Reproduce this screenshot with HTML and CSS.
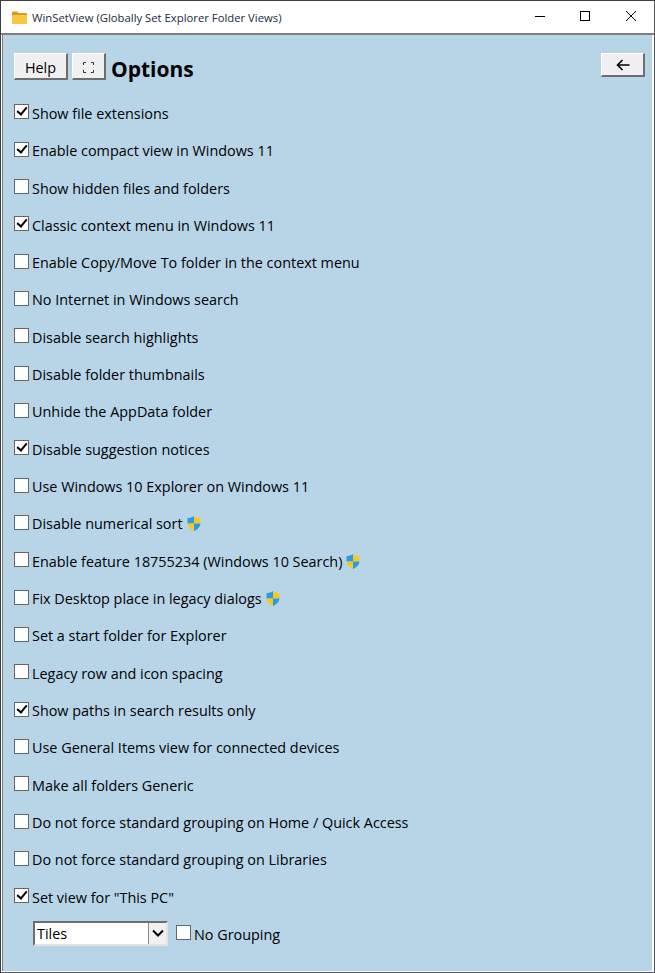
FILE: index.html
```html
<!DOCTYPE html>
<html lang="en">
<head>
    <meta charset="UTF-8">
    <meta name="viewport" content="width=device-width, initial-scale=1.0">
    <title>WinSetView (Globally Set Explorer Folder Views)</title>
    <link rel="stylesheet" href="styles.css">
</head>
<body>
    <div class="window">
        <div class="titlebar">
            <svg class="app-icon" width="15" height="13" viewBox="0 0 15 13">
                <path d="M0 3V1.500a1 1 0 0 1 1-1h4l1.500 1.500H14a1 1 0 0 1 1 1V5H0z" fill="#d99a1c"/>
                <path d="M0 4h15v8a1 1 0 0 1-1 1H1a1 1 0 0 1-1-1z" fill="#f6c644"/>
            </svg>
            <span class="title-text">WinSetView (Globally Set Explorer Folder Views)</span>
            <div class="window-controls">
                <svg class="win-btn" width="46" height="30" viewBox="0 0 46 30"><path d="M19 14.500h10" stroke="#000" fill="none"/></svg>
                <svg class="win-btn" width="46" height="30" viewBox="0 0 46 30"><rect x="18.500" y="9.500" width="9" height="9" stroke="#000" fill="none"/></svg>
                <svg class="win-btn" width="46" height="30" viewBox="0 0 46 30"><path d="M18 9l10 10M28 9l-10 10" stroke="#000" fill="none"/></svg>
            </div>
        </div>
        <div class="content">
            <div class="toolbar">
                <button class="btn btn-help">Help</button>
                <button class="btn btn-full">
                    <svg width="11" height="11" viewBox="0 0 11 11"><path d="M.5 3V.5H3M8 .5h2.500V3M10.500 8v2.500H8M3 10.500H.5V8" stroke="#333" fill="none"/></svg>
                </button>
                <h1 class="heading">Options</h1>
                <button class="btn btn-back">
                    <svg width="14" height="12" viewBox="0 0 14 12"><path d="M13.500 6H1.500M6.500 1l-5 5 5 5" stroke="#000" stroke-width="1.600" fill="none"/></svg>
                </button>
            </div>
            <div class="options">
                <label class="option"><input type="checkbox" checked><span>Show file extensions</span></label>
                <label class="option"><input type="checkbox" checked><span>Enable compact view in Windows 11</span></label>
                <label class="option"><input type="checkbox"><span>Show hidden files and folders</span></label>
                <label class="option"><input type="checkbox" checked><span>Classic context menu in Windows 11</span></label>
                <label class="option"><input type="checkbox"><span>Enable Copy/Move To folder in the context menu</span></label>
                <label class="option"><input type="checkbox"><span>No Internet in Windows search</span></label>
                <label class="option"><input type="checkbox"><span>Disable search highlights</span></label>
                <label class="option"><input type="checkbox"><span>Disable folder thumbnails</span></label>
                <label class="option"><input type="checkbox"><span>Unhide the AppData folder</span></label>
                <label class="option"><input type="checkbox" checked><span>Disable suggestion notices</span></label>
                <label class="option"><input type="checkbox"><span>Use Windows 10 Explorer on Windows 11</span></label>
                <label class="option"><input type="checkbox"><span>Disable numerical sort</span>
                    <svg class="shield" width="14" height="15" viewBox="0 0 14 15"><path d="M7 0C5 1.500 3 2 .5 2v5.500H7z" fill="#2a9be0"/><path d="M7 0c2 1.500 4 2 6.500 2v5.500H7z" fill="#f8c81e"/><path d="M.5 7.500C.8 11 3.500 13.500 7 15V7.500z" fill="#f8c81e"/><path d="M13.500 7.500C13.200 11 10.500 13.500 7 15V7.500z" fill="#2a9be0"/></svg>
                </label>
                <label class="option"><input type="checkbox"><span>Enable feature 18755234 (Windows 10 Search)</span>
                    <svg class="shield" width="14" height="15" viewBox="0 0 14 15"><path d="M7 0C5 1.500 3 2 .5 2v5.500H7z" fill="#2a9be0"/><path d="M7 0c2 1.500 4 2 6.500 2v5.500H7z" fill="#f8c81e"/><path d="M.5 7.500C.8 11 3.500 13.500 7 15V7.500z" fill="#f8c81e"/><path d="M13.500 7.500C13.200 11 10.500 13.500 7 15V7.500z" fill="#2a9be0"/></svg>
                </label>
                <label class="option"><input type="checkbox"><span>Fix Desktop place in legacy dialogs</span>
                    <svg class="shield" width="14" height="15" viewBox="0 0 14 15"><path d="M7 0C5 1.500 3 2 .5 2v5.500H7z" fill="#2a9be0"/><path d="M7 0c2 1.500 4 2 6.500 2v5.500H7z" fill="#f8c81e"/><path d="M.5 7.500C.8 11 3.500 13.500 7 15V7.500z" fill="#f8c81e"/><path d="M13.500 7.500C13.200 11 10.500 13.500 7 15V7.500z" fill="#2a9be0"/></svg>
                </label>
                <label class="option"><input type="checkbox"><span>Set a start folder for Explorer</span></label>
                <label class="option"><input type="checkbox"><span>Legacy row and icon spacing</span></label>
                <label class="option"><input type="checkbox" checked><span>Show paths in search results only</span></label>
                <label class="option"><input type="checkbox"><span>Use General Items view for connected devices</span></label>
                <label class="option"><input type="checkbox"><span>Make all folders Generic</span></label>
                <label class="option"><input type="checkbox"><span>Do not force standard grouping on Home / Quick Access</span></label>
                <label class="option"><input type="checkbox"><span>Do not force standard grouping on Libraries</span></label>
                <label class="option"><input type="checkbox" checked><span>Set view for "This PC"</span></label>
            </div>
            <div class="view-row">
                <div class="select-box">
                    <span class="select-text">Tiles</span>
                    <span class="select-arrow">
                        <svg width="12" height="8" viewBox="0 0 12 8"><path d="M1 1.500l5 5 5-5" stroke="#000" stroke-width="2" fill="none"/></svg>
                    </span>
                </div>
                <label class="option"><input type="checkbox"><span>No Grouping</span></label>
            </div>
        </div>
    </div>
</body>
</html>
```

FILE: styles.css
```css
html, body {
    height: 100%;
}
body {
    margin: 0;
    font-family: "Open Sans", "Noto Sans", sans-serif;
    font-size: 14.4px;
    color: #000;
    background-color: #fff;
}
.window {
    display: flex;
    flex-direction: column;
    height: 973px;
    overflow: hidden;
    box-sizing: border-box;
    border: 1px solid #55595e;
    border-left-color: #3a3f45;
    border-top-color: #3a3f45;
}
.titlebar {
    display: flex;
    align-items: center;
    height: 32px;
    padding-left: 11px;
    flex-shrink: 0;
    background-color: #fff;
    border-bottom: 2px solid #7f7f7f;
}
.app-icon {
    margin-right: 5px;
}
.title-text {
    font-size: 11.3px;
    color: #1a2a40;
}
.window-controls {
    margin-left: auto;
    display: flex;
}
.win-btn {
    display: block;
}
.content {
    flex: 1;
    margin: 0 2px 1px 1px;
    padding-left: 11px;
    background-color: #b8d5e8;
    border-left: 1px solid #7f7f7f;
}
.toolbar {
    display: flex;
    align-items: center;
    padding-top: 18px;
    height: 27px;
}
.btn {
    box-sizing: border-box;
    height: 27px;
    padding: 0;
    font-family: inherit;
    font-size: 14.4px;
    color: #000;
    background-color: #f0f0f0;
    border: 1px solid;
    border-color: #fff #6e6e6e #6e6e6e #fff;
    border-width: 1px 2px 2px 1px;
    display: flex;
    align-items: center;
    justify-content: center;
}
.btn-help {
    width: 54px;
    padding-top: 2px;
}
.btn-full {
    width: 34px;
    margin-left: 4px;
    padding-top: 3px;
}
.btn-back {
    width: 44px;
    height: 24px;
    margin-left: auto;
    margin-right: 7px;
    align-self: flex-start;
}
.heading {
    margin: 0 0 0 5px;
    padding-top: 6px;
    font-size: 21px;
    font-weight: 700;
    line-height: 27px;
}
.options {
    display: flex;
    flex-direction: column;
    padding-top: 14.7px;
}
.option {
    display: flex;
    align-items: center;
    height: 37.33px;
    white-space: nowrap;
}
.option input {
    appearance: none;
    box-sizing: border-box;
    width: 15px;
    height: 15px;
    margin: 0 3px 3px 0;
    flex-shrink: 0;
    background-color: #fff;
    border: 1px solid #666;
    position: relative;
}
.option input:checked::after {
    content: "";
    position: absolute;
    left: 4px;
    top: 0;
    width: 4px;
    height: 8px;
    border: solid #000;
    border-width: 0 2px 2px 0;
    transform: rotate(40deg);
}
.shield {
    margin-left: 4px;
}
.view-row {
    display: flex;
    align-items: center;
    height: 37px;
    padding-left: 19px;
}
.view-row .option {
    margin-left: 8px;
}
.select-box {
    box-sizing: border-box;
    display: flex;
    align-items: center;
    width: 135px;
    height: 25px;
    margin-bottom: 2px;
    background-color: #fff;
    border: 2px solid;
    border-color: #6e6e6e #e3e3e3 #e3e3e3 #6e6e6e;
}
.select-text {
    flex: 1;
    padding-left: 2px;
}
.select-arrow {
    box-sizing: border-box;
    width: 18px;
    height: 21px;
    display: flex;
    align-items: center;
    justify-content: center;
    background-color: #f0f0f0;
    border-left: 1px solid #8a8a8a;
}
```
